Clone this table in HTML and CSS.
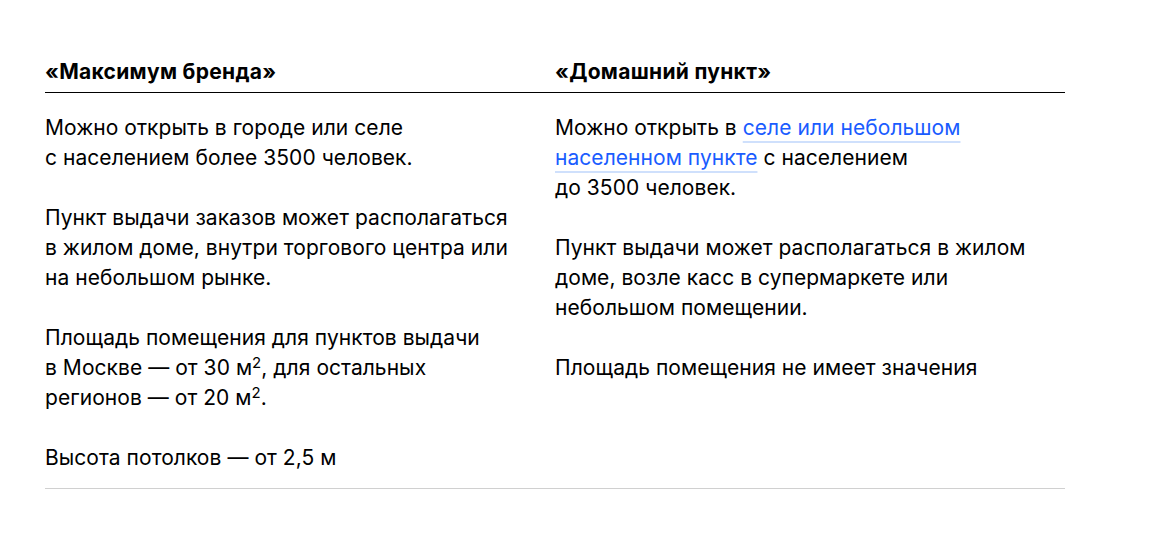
FILE: index.html
```html
<!DOCTYPE html>
<html lang="ru">
<head>
<meta charset="utf-8">
<link rel="stylesheet" href="styles.css">
</head>
<body>
<div class="page">
  <div class="table">
    <div class="head">
      <div class="title">«Максимум бренда»</div>
      <div class="title">«Домашний пункт»</div>
    </div>
    <div class="body">
      <div class="col">
        <p>Можно открыть в&nbsp;городе или селе<br>с&nbsp;населением более 3500 человек.</p>
        <p>Пункт выдачи заказов может располагаться в&nbsp;жилом доме, внутри торгового центра или на&nbsp;небольшом рынке.</p>
        <p>Площадь помещения для пунктов выдачи<br>в&nbsp;Москве&nbsp;— от&nbsp;30&nbsp;м<sup>2</sup>, для остальных<br>регионов&nbsp;— от&nbsp;20&nbsp;м<sup>2</sup>.</p>
        <p>Высота потолков&nbsp;— от&nbsp;2,5&nbsp;м</p>
      </div>
      <div class="col">
        <p>Можно открыть в&nbsp;<a class="link" href="#">селе или небольшом населенном пункте</a> с&nbsp;населением<br>до&nbsp;3500 человек.</p>
        <p>Пункт выдачи может располагаться в&nbsp;жилом доме, возле касс в&nbsp;супермаркете или небольшом помещении.</p>
        <p>Площадь помещения не&nbsp;имеет значения</p>
      </div>
    </div>
  </div>
</div>
</body>
</html>
```
FILE: styles.css
```css
html, body {
  margin: 0;
  padding: 0;
  background: #ffffff;
}
.page {
  padding: 60px 0 0 45px;
  font-family: Inter, "Liberation Sans", sans-serif;
  color: #000000;
}
.table {
  width: 1020px;
  border-bottom: 1px solid #d0d0d0;
}
.head {
  display: grid;
  grid-template-columns: 510px 510px;
  border-bottom: 1px solid #000000;
  padding-bottom: 8px;
}
.title {
  font-size: 21px;
  font-weight: 700;
  line-height: 24px;
  letter-spacing: 0.3px;
}
.body {
  display: grid;
  grid-template-columns: 510px 510px;
  padding: 20px 0 15px;
}
.col {
  display: flex;
  flex-direction: column;
  gap: 30px;
  padding-right: 34px;
}
.col p {
  margin: 0;
  font-size: 21px;
  line-height: 30px;
  letter-spacing: 0.05px;
}
.col sup {
  font-size: 15px;
  line-height: 0;
  vertical-align: 7px;
}
.link {
  color: #1a5cff;
  text-decoration: underline;
  text-decoration-color: #cfe0fc;
  text-decoration-thickness: 2px;
  text-underline-offset: 6px;
}
```
